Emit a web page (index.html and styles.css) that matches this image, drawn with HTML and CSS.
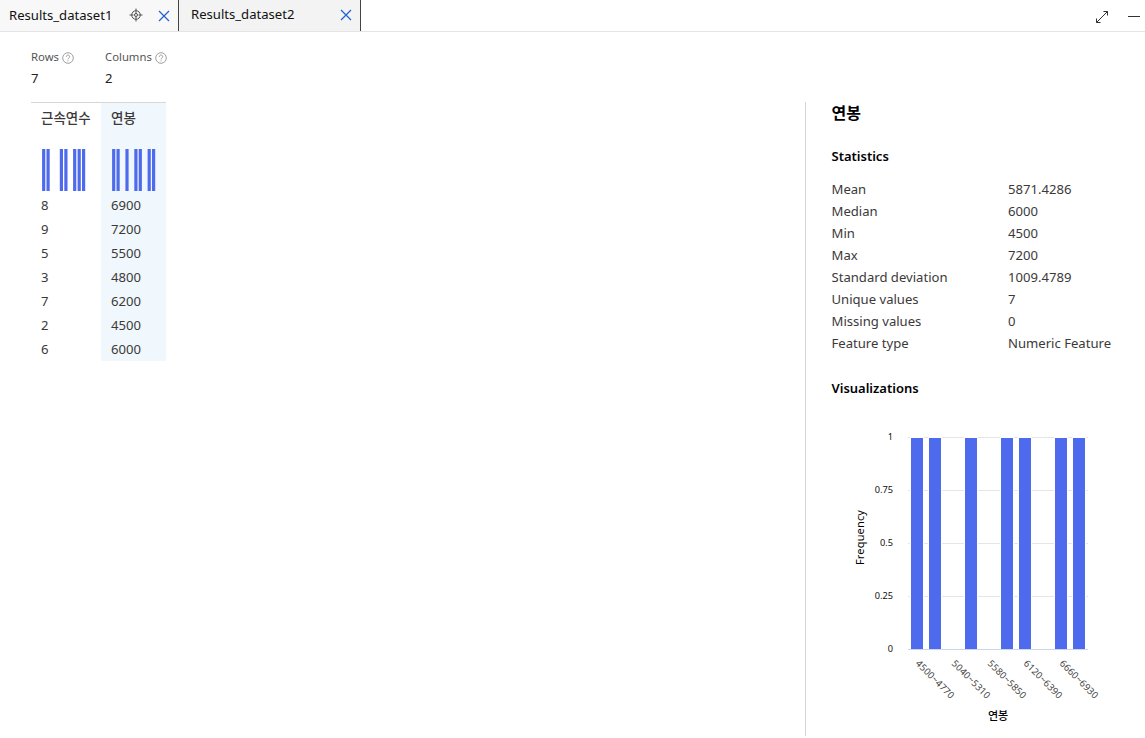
FILE: index.html
```html
<!DOCTYPE html>
<html lang="en">
<head>
<meta charset="utf-8">
<title>Results</title>
<link rel="stylesheet" href="styles.css">
</head>
<body>
<header class="tabbar">
  <div class="tab tab-active">
    <span class="tab-label">Results_dataset1</span>
    <svg class="target" width="14" height="14" viewBox="0 0 14 14"><circle cx="7" cy="7" r="4.300"/><circle cx="7" cy="7" r="1.500"/><path d="M7 .5v5M7 8.500v5M.5 7h4M9.500 7h4"/></svg>
    <svg class="close" width="12" height="12" viewBox="0 0 12 12"><path d="M1 1l10 10M11 1L1 11"/></svg>
  </div>
  <div class="tab tab-second">
    <span class="tab-label">Results_dataset2</span>
    <svg class="close" width="12" height="12" viewBox="0 0 12 12"><path d="M1 1l10 10M11 1L1 11"/></svg>
  </div>
  <div class="window-actions">
    <svg width="14" height="14" viewBox="0 0 14 14"><path d="M1.500 12.500l11-11M8.500 1.500h4v4M1.500 8.500v4h4"/></svg>
    <svg width="12" height="14" viewBox="0 0 12 14"><path d="M0 6.500h12"/></svg>
  </div>
</header>
<main class="content">
  <section class="data">
    <div class="summary">
      <div class="metric metric-rows">
        <div class="metric-name">Rows <svg width="12" height="12" viewBox="0 0 12 12"><circle cx="6" cy="6" r="5.300"/><path d="M4.300 4.800C4.300 2.500 7.700 2.500 7.700 4.700C7.700 6 6 5.900 6 7.400M6 8.400v1"/></svg></div>
        <div class="metric-value">7</div>
      </div>
      <div class="metric">
        <div class="metric-name">Columns <svg width="12" height="12" viewBox="0 0 12 12"><circle cx="6" cy="6" r="5.300"/><path d="M4.300 4.800C4.300 2.500 7.700 2.500 7.700 4.700C7.700 6 6 5.900 6 7.400M6 8.400v1"/></svg></div>
        <div class="metric-value">2</div>
      </div>
    </div>
    <div class="table">
      <div class="column column-years">
        <div class="column-name">근속연수</div>
        <svg class="spark" width="45" height="42" viewBox="0 0 45 42"><path d="M2.700 0v42M7.100 0v42M20.400 0v42M24.900 0v42M33.700 0v42M38.200 0v42M42.600 0v42"/></svg>
        <div class="cell">8</div><div class="cell">9</div><div class="cell">5</div><div class="cell">3</div><div class="cell">7</div><div class="cell">2</div><div class="cell">6</div>
      </div>
      <div class="column column-selected">
        <div class="column-name">연봉</div>
        <svg class="spark" width="45" height="42" viewBox="0 0 45 42"><path d="M2.700 0v42M7.100 0v42M16 0v42M24.900 0v42M29.300 0v42M38.200 0v42M42.600 0v42"/></svg>
        <div class="cell">6900</div><div class="cell">7200</div><div class="cell">5500</div><div class="cell">4800</div><div class="cell">6200</div><div class="cell">4500</div><div class="cell">6000</div>
      </div>
    </div>
  </section>
  <aside class="details">
    <h1 class="title">연봉</h1>
    <h2 class="heading">Statistics</h2>
    <dl class="stats">
      <dt>Mean</dt><dd>5871.4286</dd>
      <dt>Median</dt><dd>6000</dd>
      <dt>Min</dt><dd>4500</dd>
      <dt>Max</dt><dd>7200</dd>
      <dt>Standard deviation</dt><dd>1009.4789</dd>
      <dt>Unique values</dt><dd>7</dd>
      <dt>Missing values</dt><dd>0</dd>
      <dt>Feature type</dt><dd>Numeric Feature</dd>
    </dl>
    <h2 class="heading">Visualizations</h2>
    <svg class="chart" width="300" height="318" viewBox="840 420 300 318">
      <path class="grid" d="M908 437.500h180M908 490.500h180M908 543.500h180M908 596.500h180"/>
      <g class="bars">
        <rect x="910.500" y="437.500" width="13" height="212"/>
        <rect x="928.500" y="437.500" width="13" height="212"/>
        <rect x="964.500" y="437.500" width="13" height="212"/>
        <rect x="1000.500" y="437.500" width="13" height="212"/>
        <rect x="1018.500" y="437.500" width="13" height="212"/>
        <rect x="1054.500" y="437.500" width="13" height="212"/>
        <rect x="1072.500" y="437.500" width="13" height="212"/>
      </g>
      <path class="axis" d="M908 649.500h180"/>
      <g class="ylabels">
        <text x="893" y="440">1</text>
        <text x="893" y="493">0.75</text>
        <text x="893" y="546">0.5</text>
        <text x="893" y="599">0.25</text>
        <text x="893" y="652">0</text>
      </g>
      <text class="axis-title" transform="translate(864 565) rotate(-90)" textLength="55">Frequency</text>
      <g class="xlabels">
        <text transform="translate(915 664) rotate(45)" textLength="50">4500~4770</text>
        <text transform="translate(951 664) rotate(45)" textLength="50">5040~5310</text>
        <text transform="translate(987 664) rotate(45)" textLength="50">5580~5850</text>
        <text transform="translate(1023 664) rotate(45)" textLength="50">6120~6390</text>
        <text transform="translate(1059 664) rotate(45)" textLength="50">6660~6930</text>
      </g>
      <text class="axis-title axis-korean" x="998" y="720">연봉</text>
    </svg>
  </aside>
</main>
</body>
</html>
```
FILE: styles.css
```css
* { box-sizing: border-box; }
body {
  margin: 0;
  height: 738px;
  overflow: hidden;
  background: #fff;
  color: #3b3a39;
  font: 13.1px/20px "Noto Sans", "Noto Sans CJK KR", sans-serif;
}
svg { display: block; flex: none; fill: none; }
.tabbar { display: flex; height: 32px; border-bottom: 1px solid #e5e5e5; }
.tab { display: flex; align-items: center; height: 31px; background: #f3f3f3; border-right: 1px solid #444; color: #111; }
.tab-active { width: 179px; padding: 0 9px; background: #f8f8f8; }
.tab-second { width: 182px; padding: 0 8px 2px 12px; }
.tab-label { flex: 1; padding-bottom: 2px; white-space: nowrap; }
.target { margin: 0 15px 2px 0; stroke: #555; stroke-width: 1; }
.close { stroke: #2564cf; stroke-width: 1.300; }
.tab-active .close { margin: 1px -1px 0 0; }
.tab-second .close { margin: 1px 0 0; }
.window-actions { display: flex; gap: 19px; margin-left: auto; padding: 10px 5px 0 0; stroke: #333; stroke-width: 1; }
.content { display: flex; height: 706px; }
.data { width: 805px; padding: 15px 0 0 31px; }
.summary { display: flex; height: 55px; }
.metric-rows { width: 74px; }
.metric-name { display: flex; align-items: center; gap: 3px; height: 20px; font-size: 11.300px; color: #555; }
.metric-name svg { margin-top: 2px; stroke: #888; stroke-width: .8; }
.metric-value { height: 22px; line-height: 22px; color: #222; }
.table { display: flex; width: 135px; border-top: 1px solid #d6d6d6; }
.column { width: 65px; height: 258px; padding: 5px 10px 0; }
.column-years { width: 70px; }
.column-selected { background: #f1f8fd; }
.column-name { height: 41px; font-size: 13.500px; font-weight: 500; line-height: 20px; white-space: nowrap; }
.spark { stroke: #4f6bed; stroke-width: 3.200; margin-bottom: 2px; }
.cell { height: 24px; line-height: 24px; }
.details { width: 340px; height: 634px; margin-top: 70px; padding-left: 25.500px; border-left: 1px solid #d6d6d6; }
.title { margin: 0; height: 44px; color: #000; font-size: 16px; font-weight: 700; line-height: 22px; }
.heading { margin: 0; height: 32px; color: #000; font-size: 13px; font-weight: 600; line-height: 20px; }
.stats { display: grid; grid-template-columns: 176.500px 1fr; grid-auto-rows: 22px; margin: 0; height: 200px; line-height: 22px; white-space: nowrap; }
.stats dd { margin: 0; }
.chart { margin: 10px 0 0 8.500px; }
.grid { stroke: #e6e6e6; }
.bars { fill: #4f6bed; stroke: #fff; }
.axis { stroke: #ccd6eb; }
.ylabels { fill: #111; font-size: 9.200px; text-anchor: end; }
.xlabels { fill: #444; font-size: 9.500px; }
.axis-title { fill: #000; font-size: 11px; }
.axis-korean { font-weight: 500; text-anchor: middle; }
```
